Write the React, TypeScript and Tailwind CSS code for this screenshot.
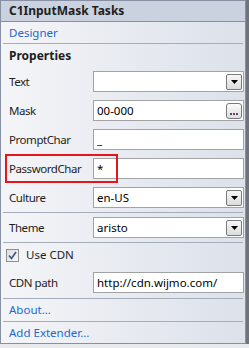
import React from 'react';

const font = { fontFamily: '"Noto Sans", "Open Sans", sans-serif' };

const Arrow = () => (
  <div className="w-[16px] h-[16px] border border-[#7a7a7a] rounded-[2px] bg-linear-to-b from-[#f7f7f7] to-[#dcdcdc] flex items-center justify-center">
    <svg width="7" height="4" viewBox="0 0 7 4">
      <path d="M0 0h7L3.5 4z" fill="#000" />
    </svg>
  </div>
);

const Ellipsis = () => (
  <div className="w-[16px] h-[16px] border border-[#7a7a7a] rounded-[3px] bg-linear-to-b from-[#fbfbfb] to-[#dedede] flex items-end justify-center pb-[3px] gap-[1px]">
    <span className="w-[2px] h-[2px] bg-[#3050a0]" />
    <span className="w-[2px] h-[2px] bg-[#a03030]" />
    <span className="w-[2px] h-[2px] bg-[#3050a0]" />
  </div>
);

const Sep = () => <div className="mx-[2px] h-px bg-[#a5adba]" />;

const Box: React.FC<{ value?: string; kind?: 'combo' | 'dots' }> = ({ value, kind }) => (
  <div className="w-[151px] h-[21px] border border-[#a3a3a3] bg-white flex items-center pl-[3px] pr-[1px]">
    <span className="flex-1 text-[11.5px] text-black leading-[16px] whitespace-nowrap overflow-hidden">{value}</span>
    {kind === 'combo' && <Arrow />}
    {kind === 'dots' && <Ellipsis />}
  </div>
);

const Row: React.FC<{ label: string; value?: string; kind?: 'combo' | 'dots'; h?: string; boxed?: boolean }> = ({ label, value, kind, h = 'h-[29px]', boxed }) => (
  <div className={`${h} flex items-center pr-[1px] relative`}>
    {boxed && <div className="absolute left-[4px] top-[0px] w-[113px] h-[29px] border-2 border-[#e8141a]" />}
    <span className="w-[92px] pl-[8px] text-[11.5px] tracking-[-0.45px] text-[#1e1e1e] whitespace-nowrap">{label}</span>
    <Box value={value} kind={kind} />
  </div>
);

export default function App() {
  return (
    <div className="w-[249px] h-[348px] bg-[#cfd2d8] flex flex-col" style={font}>
      <div className="flex">
        <div className="w-[246px] h-[344px] border border-[#8790a3] flex flex-col bg-linear-to-r from-[#f4f5f8] to-[#dce1ea]">
          <div className="h-[21px] border-b border-[#8790a3] bg-[#cbd2df] flex items-center pl-[8px] text-[12px] font-bold text-[#1e1e1e]">
            C1InputMask Tasks
          </div>
          <div className="h-[21px] flex items-center pl-[8px] text-[11.5px] text-[#1f68cc]">Designer</div>
          <Sep />
          <div className="h-[23px] flex items-center pl-[8px] text-[12px] font-bold text-[#1e1e1e]">Properties</div>
          <Row label="Text" kind="combo" />
          <Row label="Mask" value="00-000" kind="dots" />
          <Row label="PromptChar" value="_" />
          <Row label="PasswordChar" value="*" boxed />
          <Row label="Culture" value="en-US" kind="combo" />
          <Sep />
          <Row label="Theme" value="aristo" kind="combo" />
          <Sep />
          <div className="h-[24px] flex items-center pl-[5px] gap-[7px]">
            <div className="w-[13px] h-[13px] border border-[#8e8f8f] bg-linear-to-br from-[#dcdcdc] to-[#f8f8f8] flex items-center justify-center">
              <svg width="9" height="9" viewBox="0 0 9 9">
                <path d="M1 4.5L3.5 7.5L8 1" stroke="#3a5186" strokeWidth="1.6" fill="none" />
              </svg>
            </div>
            <span className="text-[11.5px] text-[#1e1e1e]">Use CDN</span>
          </div>
          <Row label="CDN path" value="http://cdn.wijmo.com/" h="h-[31px]" />
          <Sep />
          <div className="h-[22px] flex items-center pl-[8px] text-[11.5px] text-[#1f68cc]">About...</div>
          <Sep />
          <div className="h-[21px] flex items-center pl-[8px] text-[11.5px] text-[#1f68cc]">Add Extender...</div>
        </div>
        <div className="w-[3px] h-[344px] bg-[#6f737b]" />
      </div>
      <div className="h-[4px] bg-[#e9eaee]" />
    </div>
  );
}
